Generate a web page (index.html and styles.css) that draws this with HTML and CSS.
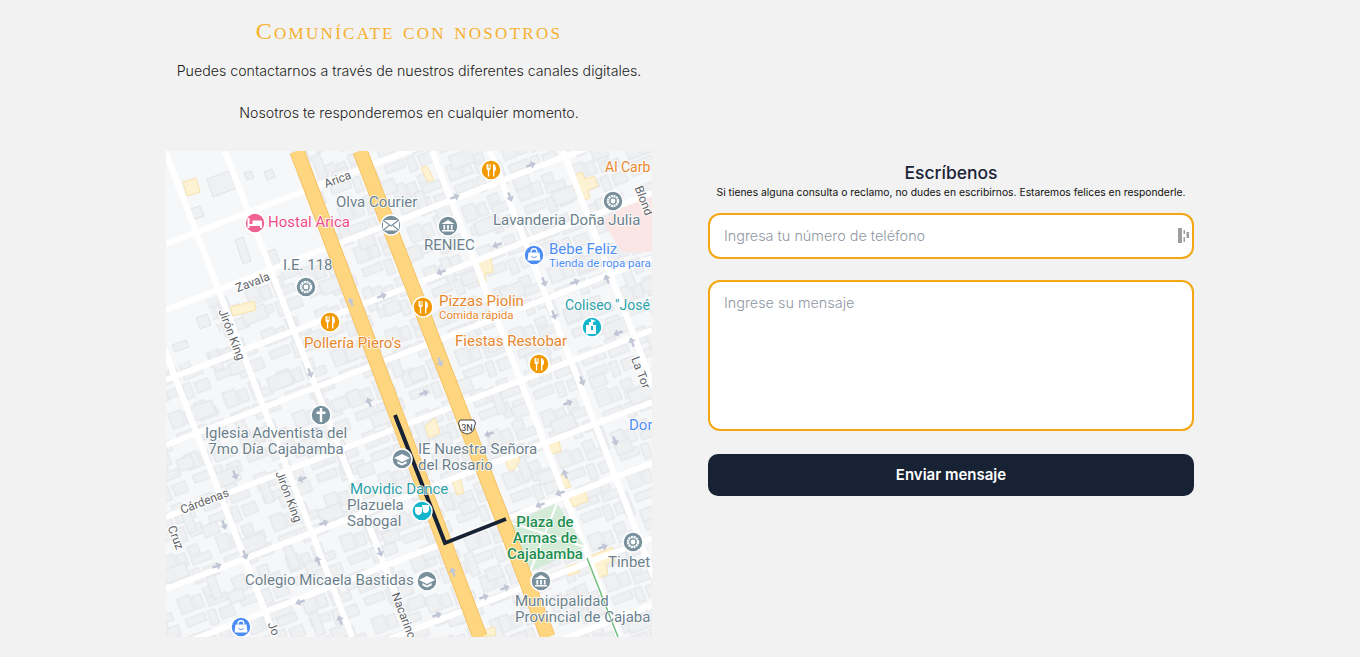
FILE: index.html
```html
<!DOCTYPE html>
<html lang="es">

<head>
    <title>Contacto</title>
    <link rel="stylesheet" href="styles.css">
</head>

<body>
    <main class="contact">
        <header class="intro">
            <h2 class="intro-title">Comunícate con nosotros</h2>
            <p>Puedes contactarnos a través de nuestros diferentes canales digitales.</p>
            <p>Nosotros te responderemos en cualquier momento.</p>
        </header>

        <div class="contact-grid">
            <!-- mapa -->
            <svg class="map" viewBox="166 151 486 486" xmlns="http://www.w3.org/2000/svg">
                <defs>
                    <pattern id="blocks" width="58" height="44" patternUnits="userSpaceOnUse" patternTransform="rotate(-21) translate(6 4)">
                        <g fill="#eff0f2" stroke="#e2e3e7" stroke-width="1">
                            <rect x="2" y="3" width="13" height="16" />
                            <rect x="17" y="6" width="9" height="13" />
                            <rect x="30" y="2" width="11" height="9" />
                            <rect x="30" y="13" width="20" height="8" />
                            <rect x="3" y="25" width="20" height="8" />
                            <rect x="26" y="25" width="8" height="15" />
                            <rect x="38" y="27" width="14" height="11" />
                        </g>
                    </pattern>
                    <pattern id="blocks-b" width="83" height="71" patternUnits="userSpaceOnUse" patternTransform="rotate(-21) translate(20 15)">
                        <g fill="#eff0f2" stroke="#e2e3e7" stroke-width="1">
                            <rect x="10" y="8" width="24" height="14" />
                            <rect x="48" y="30" width="9" height="24" />
                            <rect x="62" y="52" width="16" height="12" />
                        </g>
                    </pattern>
                    <g id="arrow"><path d="M0 -5 L4 0 L1.2 0 L1.2 5 L-1.2 5 L-1.2 0 L-4 0 Z" fill="#c0c6d6" /></g>
                    <g id="fork">
                        <path d="M-4.5 -6v4.5c0 1 .6 1.6 1.4 1.8V6.5h1.3V.3c.8-.2 1.4-.8 1.4-1.8V-6H-1v4h-.6v-4h-.9v4h-.6v-4z" fill="#fff" />
                        <path d="M2 6.5V-6c2 .4 3 2.2 3 4.6 0 1.6-.6 2.6-1.6 3V6.5z" fill="#fff" />
                    </g>
                    <g id="donut"><circle r="5" fill="none" stroke="#fff" stroke-width="2.5" stroke-dasharray="2 .6" /><circle r="2.4" fill="#fff" /></g>
                    <g id="bank"><path d="M-6.5 -2 L0 -6 L6.5 -2 Z M-6 4h12v1.6h-12z M-4.6 -1h1.8v4.4h-1.8z M-.9 -1h1.8v4.4h-1.8z M2.8 -1h1.8v4.4h-1.8z" fill="#fff" /></g>
                    <g id="cap"><path d="M0 -5 L8 -1 L0 3 L-8 -1 Z M-4.6 2 L0 4.4 L4.6 2 V4.4 L0 6.4 L-4.6 4.4 Z" fill="#fff" /></g>
                    <g id="bag"><path d="M-5.5 -2.5h11l1 8h-13z" fill="#fff" /><path d="M-3 -2.5c0-5 6-5 6 0" fill="none" stroke="#fff" stroke-width="1.3" /><path d="M-2.6 1c1 2 4.2 2 5.2 0" fill="none" stroke="#4c8df5" stroke-width="1" /></g>
                </defs>

                <rect x="166" y="151" width="486" height="486" fill="#f6f7f9" />
                <rect x="166" y="151" width="486" height="486" fill="url(#blocks)" />
                <rect x="166" y="151" width="486" height="486" fill="url(#blocks-b)" />
                <path d="M166 151H290L330 255L205 300L225 345L166 370Z" fill="#f6f7f9" />
                <g fill="#eff0f2" stroke="#e2e3e7">
                    <path d="M207 179l24-9 6 18-24 9z" />
                    <path d="M244 173l7-2 3 7-7 2z" />
                    <path d="M264 172l8-3 3 8-8 3z" />
                    <path d="M188 210l12-4 4 10-12 4z" />
                    <path d="M235 240l8-3 8 24-8 3z" />
                    <path d="M262 254l13-5 7 19-13 5z" />
                    <path d="M172 345l14-5 3 7-14 5z" />
                    <path d="M196 318l11-4 4 11-11 4z" />
                </g>
                <path d="M602 221L640 195H652V252H622Z" fill="#fbe6e6" />

                <g fill="#fdf3d3" stroke="#f9e3ad" stroke-width="1">
                    <path d="M183 182l13-4 4 14-13 4z" />
                    <path d="M230 307l24-6 2 9-23 6z" />
                    <path d="M475 262l16-4 2 14-8 2 1 8-7 1z" />
                    <path d="M572 176l10-4 3 7 9-3 4 10-10 4 2 8-9 3-3-9-3-1z" />
                    <path d="M425 426l10-8 5 15-11 5z" />
                    <path d="M544 442l14-5 3 14-13 4z" />
                    <path d="M569 497l15-8 4 12-15 6z" />
                    <path d="M505 460l13-5 2 5-6 10-5 0z" />
                    <path d="M452 480l8-3 4 16-7 2z" />
                    <path d="M557 477l8-3 6 13-8 2z" />
                    <path d="M588 557l24-10 3 14-9 3 2 10-14 6-4-11z" />
                    <path d="M567 567l10-4 2 9-10 4z" />
                    <path d="M479 632l15-5 2 8-13 2z" />
                    <path d="M421 168l6-2 7 14-6 2z" />
                </g>

                <!-- calles -->
                <g stroke="#fff" stroke-width="6" fill="none">
                    <path d="M166 244L652 57" />
                    <path d="M166 310L652 123" />
                    <path d="M166 380L652 193" />
                    <path d="M166 445L652 258" />
                    <path d="M166 517L652 330" />
                    <path d="M166 589L652 402" />
                    <path d="M166 650L652 463" />
                    <path d="M166 725L652 538" />
                    <path d="M166 792L652 605" />
                    <path d="M88 151L275 637" />
                    <path d="M165 151L352 637" />
                    <path d="M225 151L412 637" />
                    <path d="M432 151L619 637" />
                    <path d="M490 151L677 637" />
                    <path d="M563 151L750 637" />
                </g>

                <path d="M512 523L557 503L585 547L530 572Z" fill="#d4ebd8" />
                <path d="M512 523L585 547M557 503L530 572" stroke="#fff" stroke-width="2" fill="none" />
                <path d="M587 558L618 637" stroke="#6fbf7f" stroke-width="1.5" fill="none" />

                <!-- avenidas -->
                <g fill="none">
                    <path d="M297 151L480 637" stroke="#f5bb55" stroke-width="15" />
                    <path d="M360 151L548 637" stroke="#f5bb55" stroke-width="15" />
                    <path d="M297 151L480 637" stroke="#fdd67f" stroke-width="13.500" />
                    <path d="M360 151L548 637" stroke="#fdd67f" stroke-width="13.500" />
                </g>

                <path d="M395 415L445 543L506 519" fill="none" stroke="#172335" stroke-width="4" />

                <g>
                    <use href="#arrow" transform="translate(351 302) rotate(-21) scale(.9)" />
                    <use href="#arrow" transform="translate(382 296) rotate(70)" />
                    <use href="#arrow" transform="translate(310 373) rotate(160)" />
                    <use href="#arrow" transform="translate(316 431) rotate(70)" />
                    <use href="#arrow" transform="translate(455 197) rotate(70)" />
                    <use href="#arrow" transform="translate(531 165) rotate(70)" />
                    <use href="#arrow" transform="translate(510 197) rotate(160)" />
                    <use href="#arrow" transform="translate(497 245) rotate(250)" />
                    <use href="#arrow" transform="translate(441 272) rotate(250)" />
                    <use href="#arrow" transform="translate(544 282) rotate(160)" />
                    <use href="#arrow" transform="translate(575 282) rotate(70)" />
                    <use href="#arrow" transform="translate(607 279) rotate(-20)" />
                    <use href="#arrow" transform="translate(554 315) rotate(160)" />
                    <use href="#arrow" transform="translate(618 333) rotate(250)" />
                    <use href="#arrow" transform="translate(632 342) rotate(-20)" />
                    <use href="#arrow" transform="translate(440 362) rotate(160)" />
                    <use href="#arrow" transform="translate(582 381) rotate(160)" />
                    <use href="#arrow" transform="translate(424 393) rotate(70)" />
                    <use href="#arrow" transform="translate(369 402) rotate(-20)" />
                    <use href="#arrow" transform="translate(568 403) rotate(70)" />
                    <use href="#arrow" transform="translate(615 441) rotate(160)" />
                    <use href="#arrow" transform="translate(489 434) rotate(250)" />
                    <use href="#arrow" transform="translate(565 474) rotate(-20)" />
                    <use href="#arrow" transform="translate(540 505) rotate(250)" />
                    <use href="#arrow" transform="translate(560 493) rotate(250)" />
                    <use href="#arrow" transform="translate(302 479) rotate(250)" />
                    <use href="#arrow" transform="translate(235 475) rotate(160)" />
                    <use href="#arrow" transform="translate(224 525) rotate(160)" />
                    <use href="#arrow" transform="translate(245 555) rotate(160)" />
                    <use href="#arrow" transform="translate(217 566) rotate(70)" />
                    <use href="#arrow" transform="translate(324 523) rotate(70)" />
                    <use href="#arrow" transform="translate(318 561) rotate(-20)" />
                    <use href="#arrow" transform="translate(380 552) rotate(160)" />
                    <use href="#arrow" transform="translate(300 602) rotate(250)" />
                    <use href="#arrow" transform="translate(340 620) rotate(-20)" />
                    <use href="#arrow" transform="translate(453 572) rotate(-20)" />
                    <use href="#arrow" transform="translate(484 597) rotate(70)" />
                    <use href="#arrow" transform="translate(505 588) rotate(70)" />
                    <use href="#arrow" transform="translate(437 615) rotate(70)" />
                    <use href="#arrow" transform="translate(603 547) rotate(70)" />
                </g>

                <!-- iconos -->
                <g stroke="#fff" stroke-width="1.500">
                    <circle cx="491" cy="170" r="10" fill="#f29900" />
                    <circle cx="423" cy="307" r="10" fill="#f29900" />
                    <circle cx="330" cy="322" r="10" fill="#f29900" />
                    <circle cx="539" cy="364" r="10" fill="#f29900" />
                    <circle cx="255" cy="223" r="10" fill="#f06292" />
                    <circle cx="391" cy="225" r="10" fill="#78909c" />
                    <circle cx="448" cy="226" r="10" fill="#78909c" />
                    <circle cx="613" cy="201" r="10" fill="#78909c" />
                    <circle cx="306" cy="287" r="10" fill="#78909c" />
                    <circle cx="321" cy="415" r="10" fill="#78909c" />
                    <circle cx="402" cy="459" r="10" fill="#78909c" />
                    <circle cx="633" cy="542" r="10" fill="#78909c" />
                    <circle cx="427" cy="581" r="10" fill="#78909c" />
                    <circle cx="541" cy="581" r="10" fill="#78909c" />
                    <circle cx="534" cy="255" r="10" fill="#4c8df5" />
                    <circle cx="241" cy="627" r="10" fill="#4c8df5" />
                    <circle cx="592" cy="327" r="10" fill="#12b5cb" />
                    <circle cx="422" cy="511" r="10" fill="#12b5cb" />
                </g>
                <use href="#fork" x="491" y="170" />
                <use href="#fork" x="423" y="307" />
                <use href="#fork" x="330" y="322" />
                <use href="#fork" x="539" y="364" />
                <use href="#donut" x="613" y="201" />
                <use href="#donut" x="306" y="287" />
                <use href="#donut" x="633" y="542" />
                <use href="#bank" x="448" y="226" />
                <use href="#bank" x="541" y="581" />
                <use href="#cap" x="402" y="459" />
                <use href="#cap" x="427" y="581" />
                <use href="#bag" x="534" y="255" />
                <use href="#bag" x="241" y="627" />
                <path d="M247.500 218h2v6h3v-3.500h8c1 0 1.500.7 1.500 1.500v6h-2v-2h-10.500v2h-2z" fill="#fff" />
                <path d="M383 220h16v10.500h-16z" fill="#fff" />
                <path d="M383 220l8 6 8-6M383 230.500l6-5M399 230.500l-6-5" fill="none" stroke="#78909c" stroke-width="1.200" />
                <path d="M319.800 408h2.400v3.500h3.300v2.400h-3.300v8h-2.400v-8h-3.300v-2.400h3.300z" fill="#fff" />
                <path d="M586 334v-9h3v-3h2v-3l5 2-3 1v3h3v9zM591 326v4h2v-4z" fill="#fff" fill-rule="evenodd" />
                <path d="M415 507h7v4c0 2-1.500 4-3.500 4s-3.500-2-3.500-4zM422 505h7v4c0 2-1.500 4-3.500 4-1 0-2-.5-2.500-1.500z" fill="#fff" />

                <path d="M460 420h14l1.500 3-1.500 5c0 3-3 5-7 6-4-1-7-3-7-6l-1.500-5z" fill="#fff" stroke="#444" stroke-width="1" />
                <text class="shield" x="467" y="431" text-anchor="middle">3N</text>

                <!-- nombres -->
                <g class="label grey">
                    <text x="336" y="207">Olva Courier</text>
                    <text x="283" y="270">I.E. 118</text>
                    <text x="424" y="250">RENIEC</text>
                    <text x="493" y="225">Lavanderia Doña Julia</text>
                    <text x="276" y="438" text-anchor="middle">Iglesia Adventista del</text>
                    <text x="276" y="454" text-anchor="middle">7mo Día Cajabamba</text>
                    <text x="418" y="454">IE Nuestra Señora</text>
                    <text x="418" y="470">del Rosario</text>
                    <text x="347" y="510">Plazuela</text>
                    <text x="347" y="526">Sabogal</text>
                    <text x="608" y="567">Tinbet</text>
                    <text x="245" y="585">Colegio Micaela Bastidas</text>
                    <text x="515" y="606">Municipalidad</text>
                    <text x="515" y="622">Provincial de Cajaba</text>
                </g>
                <g class="label orange">
                    <text class="tight" x="605" y="172">Al Carb</text>
                    <text x="439" y="306">Pizzas Piolin</text>
                    <text class="small" x="439" y="319">Comida rápida</text>
                    <text x="455" y="346">Fiestas Restobar</text>
                    <text x="304" y="348">Pollería Piero's</text>
                </g>
                <g class="label blue">
                    <text x="549" y="254">Bebe Feliz</text>
                    <text class="small" x="549" y="267">Tienda de ropa para</text>
                    <text x="629" y="430">Dor</text>
                </g>
                <g class="label teal">
                    <text class="tight" x="565" y="310">Coliseo "José</text>
                    <text x="350" y="494">Movidic Dance</text>
                </g>
                <text class="label pink" x="268" y="227">Hostal Arica</text>
                <g class="label green" text-anchor="middle">
                    <text x="545" y="527">Plaza de</text>
                    <text x="545" y="543">Armas de</text>
                    <text x="545" y="559">Cajabamba</text>
                </g>
                <g class="street" text-anchor="middle">
                    <text transform="translate(339 183) rotate(-21)">Arica</text>
                    <text transform="translate(254 286) rotate(-21)">Zavala</text>
                    <text transform="translate(228 336) rotate(69)">Jirón King</text>
                    <text transform="translate(206 505) rotate(-21)">Cárdenas</text>
                    <text transform="translate(285 498) rotate(69)">Jirón King</text>
                    <text transform="translate(172 539) rotate(69)">Cruz</text>
                    <text transform="translate(637 374) rotate(69)">La Tor</text>
                    <text transform="translate(640 202) rotate(69)">Blond</text>
                    <text transform="translate(400 617) rotate(69)">Nacarino</text>
                    <text transform="translate(270 630) rotate(69)">Jo</text>
                </g>
            </svg>

            <form class="message-form">
                <h3 class="form-title">Escríbenos</h3>
                <p class="form-note">Si tienes alguna consulta o reclamo, no dudes en escribirnos. Estaremos felices en responderle.</p>
                <div class="field">
                    <input class="input" type="tel" placeholder="Ingresa tu número de teléfono">
                    <svg class="field-icon" viewBox="0 0 11 15" xmlns="http://www.w3.org/2000/svg">
                        <path d="M0 0h4v15H0zM5.500 2H7v4H5.500zM5.500 9H7v5H5.500zM8.500 4H11v6H8.500z" fill="#9e9e9e" />
                    </svg>
                </div>
                <textarea class="input textarea" placeholder="Ingrese su mensaje"></textarea>
                <button class="send" type="button">Enviar mensaje</button>
            </form>
        </div>
    </main>
</body>

</html>
```

FILE: styles.css
```css
body {
    margin: 0;
    background-color: #f2f2f2;
    color: #222222;
    font-family: Inter, Lato, sans-serif;
    font-weight: 300;
}

.contact {
    width: 1028px;
    margin: 0 auto;
}

.intro {
    width: 486px;
    padding-top: 17px;
    text-align: center;
}

.intro-title {
    margin: 0 0 15px;
    color: #f6b02e;
    font-family: 'Liberation Serif', serif;
    font-size: 24px;
    font-variant: small-caps;
    font-weight: 400;
    letter-spacing: 2.300px;
    line-height: 28px;
}

.intro p {
    margin: 0 0 21px;
    font-size: 14.200px;
    line-height: 21px;
}

.contact-grid {
    display: grid;
    grid-template-columns: 486px 486px;
    gap: 56px;
    margin-top: 28px;
}

.map {
    display: block;
    width: 486px;
    height: 486px;
}

.label text,
text.label {
    font-family: Roboto, sans-serif;
    font-size: 15px;
    font-weight: 400;
    paint-order: stroke;
    stroke: #ffffff;
    stroke-width: 1.500px;
}

.label .small {
    font-size: 11.500px;
}

.label .tight {
    font-size: 14px;
}

.grey { fill: #6b7f8d; }
.orange { fill: #e8862c; }
.blue { fill: #4c8df5; }
.teal { fill: #2b9fa8; }
.pink { fill: #ee4d8b; }

.label.green text {
    fill: #1e8e4e;
    font-weight: 500;
}

.street text {
    fill: #5f6368;
    font-family: Roboto, sans-serif;
    font-size: 12px;
    font-weight: 400;
    paint-order: stroke;
    stroke: #ffffff;
    stroke-width: 2px;
}

.shield {
    fill: #333333;
    font-family: Roboto, sans-serif;
    font-size: 9px;
    font-weight: 400;
}

.message-form {
    display: flex;
    flex-direction: column;
    padding-top: 11px;
}

.form-title {
    margin: 0;
    color: #1a2436;
    font-size: 17.500px;
    font-weight: 500;
    line-height: 22px;
    text-align: center;
}

.form-note {
    margin: 0 0 13px;
    color: #111111;
    font-size: 10.350px;
    font-weight: 400;
    line-height: 16px;
    text-align: center;
}

.field {
    position: relative;
    margin-bottom: 21px;
}

.input {
    display: block;
    box-sizing: border-box;
    width: 100%;
    height: 46px;
    padding: 0 14px 2px;
    background-color: #ffffff;
    border: 2px solid #f4a613;
    border-radius: 12px;
    color: #333333;
    font-family: Inter, Lato, sans-serif;
    font-size: 14.400px;
    font-weight: 300;
    outline: none;
}

.input::placeholder {
    color: #8f97a3;
    opacity: 1;
}

.textarea {
    height: 151px;
    padding-top: 12px;
    margin-bottom: 23px;
    resize: none;
}

.field-icon {
    position: absolute;
    top: 15px;
    right: 5px;
    width: 11px;
    height: 15px;
}

.send {
    height: 42px;
    padding-bottom: 2px;
    background-color: #172335;
    border: none;
    border-radius: 10px;
    color: #ffffff;
    cursor: pointer;
    font-family: Inter, Lato, sans-serif;
    font-size: 15px;
    font-weight: 600;
}
```
